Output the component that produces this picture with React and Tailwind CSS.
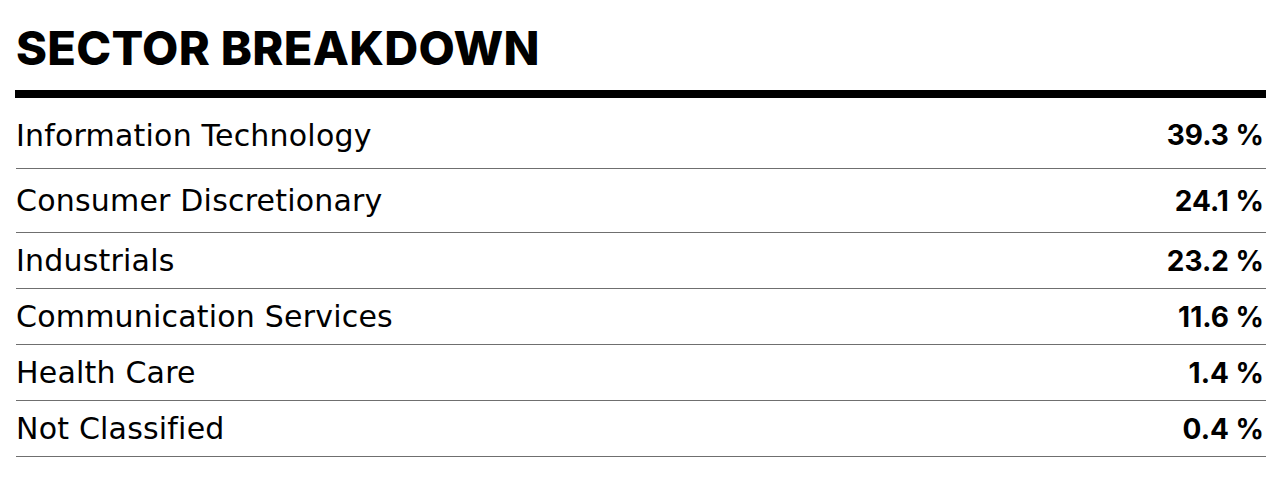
import React from "react";

const rows = [
  { name: "Information Technology", value: "39.3 %", h: "h-[71px] pt-[4px]" },
  { name: "Consumer Discretionary", value: "24.1 %", h: "h-[64px]" },
  { name: "Industrials", value: "23.2 %", h: "h-[56px]" },
  { name: "Communication Services", value: "11.6 %", h: "h-[56px]" },
  { name: "Health Care", value: "1.4 %", h: "h-[56px]" },
  { name: "Not Classified", value: "0.4 %", h: "h-[56px]" },
];

export default function App() {
  return (
    <div className="w-[1286px] h-[488px] bg-white text-black pl-[16px] pr-[20px] pt-[24px]" style={{ fontFamily: "Inter, 'Noto Sans', sans-serif" }}>
      <h2 className="text-[47px] leading-none font-extrabold tracking-[0.3px]">SECTOR BREAKDOWN</h2>
      <div className="mt-[19px] h-[8px] bg-black -ml-px"></div>
      <div>
        {rows.map((r) => (
          <div key={r.name} className={`${r.h} flex items-center justify-between border-b border-[#6f6f6f]`}>
            <span className="tracking-[0.2px] font-['DejaVu_Sans',sans-serif] text-[30px]">{r.name}</span>
            <span className="font-bold text-[28px] pr-[2px]">{r.value}</span>
          </div>
        ))}
      </div>
    </div>
  );
}
